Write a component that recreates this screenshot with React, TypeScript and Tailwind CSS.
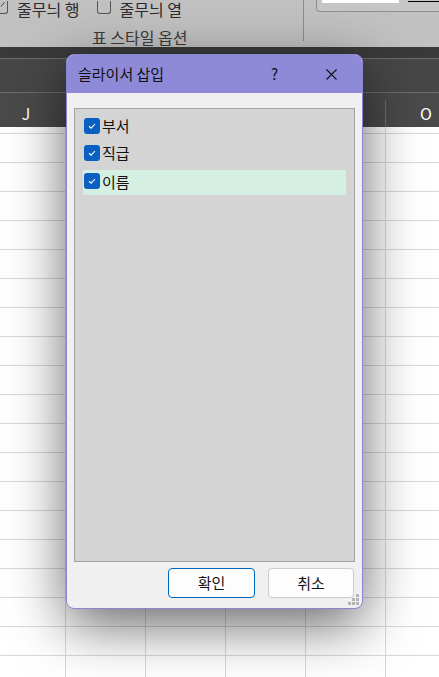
import { X } from "lucide-react";

const font = { fontFamily: '"Noto Sans CJK KR", "Noto Sans", sans-serif' };

function Check({ className = "" }: { className?: string }) {
  return (
    <span className={`grid h-[16px] w-[16px] shrink-0 place-items-center rounded-[3px] bg-[#0a5fc2] ${className}`}>
      <svg viewBox="0 0 12 12" className="h-[10px] w-[10px]" fill="none" stroke="white" strokeWidth="1.3">
        <path d="M2.5 6.3 L5 8.6 L9.6 3.6" />
      </svg>
    </span>
  );
}

function Ribbon() {
  return (
    <div className="relative h-[47px] shrink-0 bg-[#c1c1c1] text-[16px] leading-[16px] text-[#2b2b2b]">
      <div className="flex items-start gap-2 pt-[1px]">
        <span className="-ml-[6px] h-[13px] w-[14px] rounded-b-[3px] border border-t-0 border-[#555]">
          <svg viewBox="0 0 14 13" className="h-full w-full" fill="none" stroke="#333" strokeWidth="1">
            <path d="M7 6 L11 1" />
          </svg>
        </span>
        <span className="ml-[1px]">줄무늬 행</span>
        <span className="ml-[10px] h-[13px] w-[14px] rounded-b-[3px] border border-t-0 border-[#555]" />
        <span>줄무늬 열</span>
      </div>
      <div className="ml-[92px] mt-[12px] text-[#3a3a3a]">표 스타일 옵션</div>
      <div className="absolute left-[303px] top-0 h-[41px] w-px bg-[#8c8c8c]" />
      <div className="absolute left-[316px] top-0 h-[12px] w-[140px] rounded-b-[4px] border border-t-0 border-[#8e8e8e] bg-[#c6c6c6]">
        <div className="ml-[5px] h-[3px] w-[77px] bg-white" />
      </div>
      <div className="absolute left-[408px] top-[1px] h-px w-[31px] bg-black" />
    </div>
  );
}

function Sheet() {
  const cols = ["J", "K", "L", "M", "N", "O"];
  const rows = Array.from({ length: 19 });
  return (
    <div className="flex min-h-0 flex-1 flex-col overflow-hidden">
      <div className="h-[11px] shrink-0 bg-[#3a3a3a]" />
      <div className="h-px shrink-0 bg-[#6c6c6c]" />
      <div className="h-[33px] shrink-0 bg-[#474747]" />
      <div className="h-px shrink-0 bg-[#6c6c6c]" />
      <div className="-ml-[14px] grid h-[34px] shrink-0 grid-cols-[repeat(6,80px)] bg-[#4a4a4a] text-[16px] text-white">
        {cols.map((c, i) => (
          <div key={c} className="relative flex items-center justify-center pt-[6px]" style={font}>
            <span className={i === 0 || i === 5 ? "" : "invisible"}>{c}</span>
            {i === 4 && <div className="absolute right-0 top-[7px] h-[27px] w-px bg-[#6e6e6e]" />}
          </div>
        ))}
      </div>
      <div className="-ml-[14px] flex shrink-0 flex-col bg-white">
        <div className="grid h-[7px] grid-cols-[repeat(6,80px)] border-b border-[#d8d8d8]">
          {cols.map((c) => (
            <div key={c} className="border-r border-[#d8d8d8]" />
          ))}
        </div>
        {rows.map((_, r) => (
          <div key={r} className="grid h-[29px] grid-cols-[repeat(6,80px)] border-b border-[#d8d8d8]">
            {cols.map((c) => (
              <div key={c} className="border-r border-[#d8d8d8]" />
            ))}
          </div>
        ))}
      </div>
    </div>
  );
}

function Dialog() {
  const items = ["부서", "직급", "이름"];
  return (
    <div
      className="absolute left-[66px] top-[54px] flex h-[555px] w-[297px] flex-col overflow-hidden rounded-[8px] border border-[#8a86d6] bg-[#f0f0f0] shadow-[0_16px_56px_rgba(0,0,0,0.6)]"
      style={font}
    >
      <div className="flex h-[38px] shrink-0 items-center bg-[#8e8ad8] pl-[11px] text-[15px] text-[#111]">
        <span className="flex-1">슬라이서 삽입</span>
        <span className="mr-[44px] text-[15px]">?</span>
        <X className="mr-[21px] h-[19px] w-[19px]" strokeWidth={1.4} />
      </div>
      <div className="mx-[7px] mt-[15px] h-[454px] border border-[#a3a3a3] bg-[#d4d4d4] px-[8px] pt-[3px]">
        {items.map((t, i) => (
          <div
            key={t}
            className={`flex items-center gap-[2px] pl-[1px] text-[15px] text-[#111] ${
              i === 2 ? "mt-[4px] h-[25px] bg-[#d5f0e2] pb-[3px]" : "h-[27px]"
            }`}
          >
            <Check />
            <span className="leading-none">{t}</span>
          </div>
        ))}
      </div>
      <div className="mt-[6px] flex justify-end gap-[13px] pr-[8px] text-[15px] text-[#111]">
        <button className="h-[30px] w-[87px] rounded-[4px] border border-[#0067c0] bg-[#fdfdfd]">확인</button>
        <button className="h-[30px] w-[86px] rounded-[4px] border border-[#cccccc] bg-[#fdfdfd]">취소</button>
      </div>
      <div className="absolute bottom-[3px] right-[3px] grid grid-cols-3 gap-[1px]">
        {[0, 0, 1, 0, 1, 1, 1, 1, 1].map((v, i) => (
          <span key={i} className={`h-[3px] w-[3px] ${v ? "bg-[#b4b4b4]" : ""}`} />
        ))}
      </div>
    </div>
  );
}

export default function App() {
  return (
    <div className="relative flex h-[677px] w-[439px] flex-col overflow-hidden bg-white" style={font}>
      <Ribbon />
      <Sheet />
      <Dialog />
    </div>
  );
}
